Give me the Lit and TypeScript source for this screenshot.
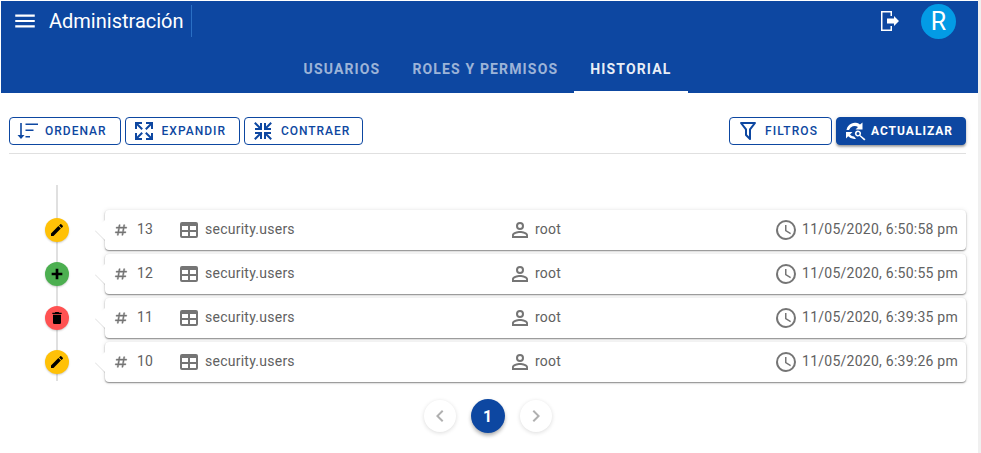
import { LitElement, html, css, svg } from "lit";
import { customElement } from "lit/decorators.js";

const P = {
  menu: "M3,6H21V8H3V6M3,11H21V13H3V11M3,16H21V18H3V16Z",
  expand: "M9.5,13.09L10.91,14.5L6.41,19H10V21H3V14H5V17.59L9.5,13.09M10.91,9.5L9.5,10.91L5,6.41V10H3V3H10V5H6.41L10.91,9.5M14.5,13.09L19,17.59V14H21V21H14V19H17.59L13.09,14.5L14.5,13.09M13.09,9.5L17.59,5H14V3H21V10H19V6.41L14.5,10.91L13.09,9.5Z",
  collapse: "M19.5,3.09L20.91,4.5L16.41,9H20V11H13V4H15V7.59L19.5,3.09M20.91,19.5L19.5,20.91L15,16.41V20H13V13H20V15H16.41L20.91,19.5M4.5,3.09L9,7.59V4H11V11H4V9H7.59L3.09,4.5L4.5,3.09M3.09,19.5L7.59,15H4V13H11V20H9V16.41L4.5,20.91L3.09,19.5Z",
  sort: "M4.2 4H5.8V16H8.5L5 20L1.5 16H4.2ZM9.5 4.5H22V6H9.5ZM9.5 10.5H17.5V12H9.5ZM9.5 17H14V18.5H9.5Z",
  exit: "M3 2H14V7H12.5V3.5H4.5V20.5H12.5V17H14V22H3ZM9 9.5H16V7L21 12L16 17V14.5H9Z",
  filter: "M15,19.88C15.04,20.18 14.94,20.5 14.71,20.71C14.32,21.1 13.69,21.1 13.3,20.71L9.29,16.7C9.06,16.47 8.96,16.16 9,15.87V10.75L4.21,4.62C3.87,4.19 3.95,3.56 4.38,3.22C4.57,3.08 4.78,3 5,3V3H19V3C19.22,3 19.43,3.08 19.62,3.22C20.05,3.56 20.13,4.19 19.79,4.62L15,10.75V19.88M7.04,5L11,10.06V15.58L13,17.58V10.05L16.96,5H7.04Z",
  refresh: "M3.5 11A8.5 8.5 0 0 1 17 5.5L19.5 3.5V10.5H12.5L15 8A6 6 0 0 0 6 11ZM3 13H9.5L7 15.5A6 6 0 0 0 11 17.5L13 19.8A8.5 8.5 0 0 1 5.2 17.2L3 19.5ZM15 11.5A3 3 0 0 1 17.5 16.2L22.5 20.2L21.2 21.5L16.4 17.1A3 3 0 1 1 15 11.5ZM15 13A1.5 1.5 0 1 0 15 16A1.5 1.5 0 0 0 15 13Z",
  table: "M5,4H19A2,2 0 0,1 21,6V18A2,2 0 0,1 19,20H5A2,2 0 0,1 3,18V6A2,2 0 0,1 5,4M5,8V12H11V8H5M13,8V12H19V8H13M5,14V18H11V14H5M13,14V18H19V14H13Z",
  user: "M12,4A4,4 0 0,1 16,8A4,4 0 0,1 12,12A4,4 0 0,1 8,8A4,4 0 0,1 12,4M12,6A2,2 0 0,0 10,8A2,2 0 0,0 12,10A2,2 0 0,0 14,8A2,2 0 0,0 12,6M12,13C14.67,13 20,14.33 20,17V20H4V17C4,14.33 9.33,13 12,13M12,14.9C9.03,14.9 5.9,16.36 5.9,17V18.1H18.1V17C18.1,16.36 14.97,14.9 12,14.9Z",
  clock: "M12,20A8,8 0 0,0 20,12A8,8 0 0,0 12,4A8,8 0 0,0 4,12A8,8 0 0,0 12,20M12,2A10,10 0 0,1 22,12A10,10 0 0,1 12,22C6.47,22 2,17.5 2,12A10,10 0 0,1 12,2M12.5,7V12.25L17,14.92L16.25,16.15L11,13V7H12.5Z",
  pencil: "M20.71,7.04C21.1,6.65 21.1,6 20.71,5.63L18.37,3.29C18,2.9 17.35,2.9 16.96,3.29L15.12,5.12L18.87,8.87M3,17.25V21H6.75L17.81,9.93L14.06,6.18L3,17.25Z",
  plus: "M20 14H14V20H10V14H4V10H10V4H14V10H20V14Z",
  trash: "M19,4H15.5L14.5,3H9.5L8.5,4H5V6H19M6,19A2,2 0 0,0 8,21H16A2,2 0 0,0 18,19V7H6V19Z",
  pound: "M5.41,21L6.12,17H2.12L2.47,15H6.47L7.53,9H3.53L3.88,7H7.88L8.59,3H10.59L9.88,7H15.88L16.59,3H18.59L17.88,7H21.88L21.53,9H17.53L16.47,15H20.47L20.12,17H16.12L15.41,21H13.41L14.12,17H8.12L7.41,21H5.41M9.53,9L8.47,15H14.47L15.53,9H9.53Z",
  left: "M15.41,16.58L10.83,12L15.41,7.41L14,6L8,12L14,18L15.41,16.58Z",
  right: "M8.59,16.58L13.17,12L8.59,7.41L10,6L16,12L10,18L8.59,16.58Z",
};

const icon = (d: string, cls = "") =>
  html`<svg class="ic ${cls}" viewBox="0 0 24 24">${svg`<path d=${d}></path>`}</svg>`;

const ROWS = [
  { id: 13, kind: "edit", time: "11/05/2020, 6:50:58 pm" },
  { id: 12, kind: "add", time: "11/05/2020, 6:50:55 pm" },
  { id: 11, kind: "del", time: "11/05/2020, 6:39:35 pm" },
  { id: 10, kind: "edit", time: "11/05/2020, 6:39:26 pm" },
];
const KIND: Record<string, string> = { edit: P.pencil, add: P.plus, del: P.trash };

@customElement("app-root")
export class AppRoot extends LitElement {
  static styles = css`
    :host { display: block; height: 453px; overflow: hidden; background: #fff; font-family: Roboto, "Liberation Sans", sans-serif; }
    * { box-sizing: border-box; }
    .page { display: flex; height: 453px; }
    .main { width: 978px; padding: 1px 0 0 1px; }
    .rail { width: 3px; background: #f0f0f0; }
    .ic { display: block; fill: currentColor; flex: none; width: 24px; height: 24px; }

    header { background: #0d47a1; height: 92px; color: #fff; display: flex; flex-direction: column; }
    .top { height: 44px; display: flex; align-items: center; padding: 0 0 4px 11px; }
    .top .menu { width: 26px; height: 26px; }
    .title { font-size: 20px; font-weight: 400; line-height: 32px; margin-left: 11px; padding-right: 7px; height: 32px; border-right: 1px solid #2a6fc4; white-space: nowrap; }
    .spacer { flex: 1; }
    .avatar { width: 35px; height: 35px; border-radius: 50%; background: #039be5; font-size: 25px; line-height: 35px; text-align: center; margin: 0 22px 0 19px; }
    .tabs { height: 48px; display: flex; justify-content: center; padding-right: 3px; }
    .tab { padding: 0 16px; font-size: 14px; font-weight: 700; letter-spacing: 1.15px; line-height: 49px; color: rgba(255,255,255,.6); position: relative; white-space: nowrap; }
    .tab.on { color: rgba(255,255,255,.93); padding-right: 17px; }
    .tab.on::after { content: ""; position: absolute; left: 0; right: 0; bottom: 0; height: 2px; background: #fff; }

    .content { padding: 24px 12px 0 8px; }
    .bar { display: flex; gap: 4px; height: 37px; padding-bottom: 8px; border-bottom: 1px solid #e0e0e0; }
    .btn { height: 28px; border: 1px solid #0d47a1; border-radius: 4px; color: #0d47a1; display: flex; align-items: center; font-size: 12px; font-weight: 500; letter-spacing: 1px; padding: 0 13px 0 6px; white-space: nowrap; background: #fff; }
    .btn .ic { margin-right: 6px; }
    .btn .tight { margin-right: 5px; }
    .btn.narrow { padding-right: 12px; letter-spacing: .95px; }
    .btn.filters { letter-spacing: 1.07px; }
    .btn.fill { background: #0d47a1; color: #fff; font-weight: 700; padding-right: 12px; box-shadow: 0 2px 3px -1px rgba(0,0,0,.3), 0 2px 2px rgba(0,0,0,.14), 0 1px 5px rgba(0,0,0,.12); }
    .btn.fill .ic { margin-right: 4px; }

    .timeline { position: relative; padding: 56px 0 0 96px; }
    .timeline::before { content: ""; position: absolute; left: 47px; top: 31px; bottom: 1px; width: 2px; background: #e0e0e0; }
    .item { position: relative; height: 40px; margin-bottom: 4px; }
    .dot { position: absolute; left: -60px; top: 8px; width: 24px; height: 24px; border-radius: 50%; display: flex; align-items: center; justify-content: center; color: #000; box-shadow: 0 1px 2px rgba(0,0,0,.2); }
    .dot .ic { width: 16px; height: 16px; }
    .edit { background: #ffc107; }
    .add { background: #4caf50; }
    .del { background: #ff5252; }
    .card { position: relative; height: 40px; background: #fff; border-radius: 4px; display: grid; grid-template-columns: 62px 331px 1fr auto; align-items: center; padding: 0 8px 0 10px; font-size: 14px; color: #616161; letter-spacing: .25px; box-shadow: 0 1px 1.5px rgba(0,0,0,.45), 0 0 5px rgba(0,0,0,.09); }
    .card::before, .card::after { content: ""; position: absolute; left: -10px; top: 10px; border-top: 10px solid transparent; border-bottom: 10px solid transparent; border-right: 10px solid #fff; }
    .card::before { top: 11px; border-right-color: rgba(0,0,0,.13); }
    .cell { display: flex; align-items: center; white-space: nowrap; }
    .t { margin-bottom: 2px; }
    .hash { width: 14px; height: 14px; margin: 0 9px 0 -1px; color: #757575; stroke: #757575; stroke-width: .8; }
    .tbl { margin-right: 4px; color: #757575; }
    .usr { margin-right: 3px; color: #757575; }
    .clk { margin-right: 4px; color: #757575; }

    .pager { display: flex; justify-content: center; align-items: center; gap: 15px; margin-top: 17px; }
    .pg { width: 32px; height: 32px; border-radius: 50%; background: #fff; color: #b0b0b0; display: flex; align-items: center; justify-content: center; box-shadow: 0 1px 4px rgba(0,0,0,.14); }
    .pg .ic { width: 24px; height: 24px; }
    .pg.on { width: 34px; height: 34px; background: #0d47a1; color: #fff; font-size: 16px; font-weight: 700; box-shadow: 0 3px 4px -1px rgba(0,0,0,.25), 0 2px 4px rgba(0,0,0,.14); }
  `;

  render() {
    return html`
      <div class="page">
        <div class="main">
          <header>
            <div class="top">
              ${icon(P.menu, "menu")}
              <div class="title">Administración</div>
              <div class="spacer"></div>
              ${icon(P.exit)}
              <div class="avatar">R</div>
            </div>
            <div class="tabs">
              <div class="tab">USUARIOS</div>
              <div class="tab">ROLES Y PERMISOS</div>
              <div class="tab on">HISTORIAL</div>
            </div>
          </header>
          <div class="content">
            <div class="bar">
              <div class="btn">${icon(P.sort, "tight")}ORDENAR</div>
              <div class="btn">${icon(P.expand)}EXPANDIR</div>
              <div class="btn narrow">${icon(P.collapse)}CONTRAER</div>
              <div class="spacer"></div>
              <div class="btn filters">${icon(P.filter, "tight")}FILTROS</div>
              <div class="btn fill">${icon(P.refresh)}ACTUALIZAR</div>
            </div>
            <div class="timeline">
              ${ROWS.map(
                (r) => html`
                  <div class="item">
                    <div class="dot ${r.kind}">${icon(KIND[r.kind])}</div>
                    <div class="card">
                      <div class="cell">${icon(P.pound, "hash")}<span class="t">${r.id}</span></div>
                      <div class="cell">${icon(P.table, "tbl")}<span class="t">security.users</span></div>
                      <div class="cell">${icon(P.user, "usr")}<span class="t">root</span></div>
                      <div class="cell">${icon(P.clock, "clk")}<span class="t">${r.time}</span></div>
                    </div>
                  </div>
                `
              )}
            </div>
            <div class="pager">
              <div class="pg">${icon(P.left)}</div>
              <div class="pg on">1</div>
              <div class="pg">${icon(P.right)}</div>
            </div>
          </div>
        </div>
        <div class="rail"></div>
      </div>
    `;
  }
}
